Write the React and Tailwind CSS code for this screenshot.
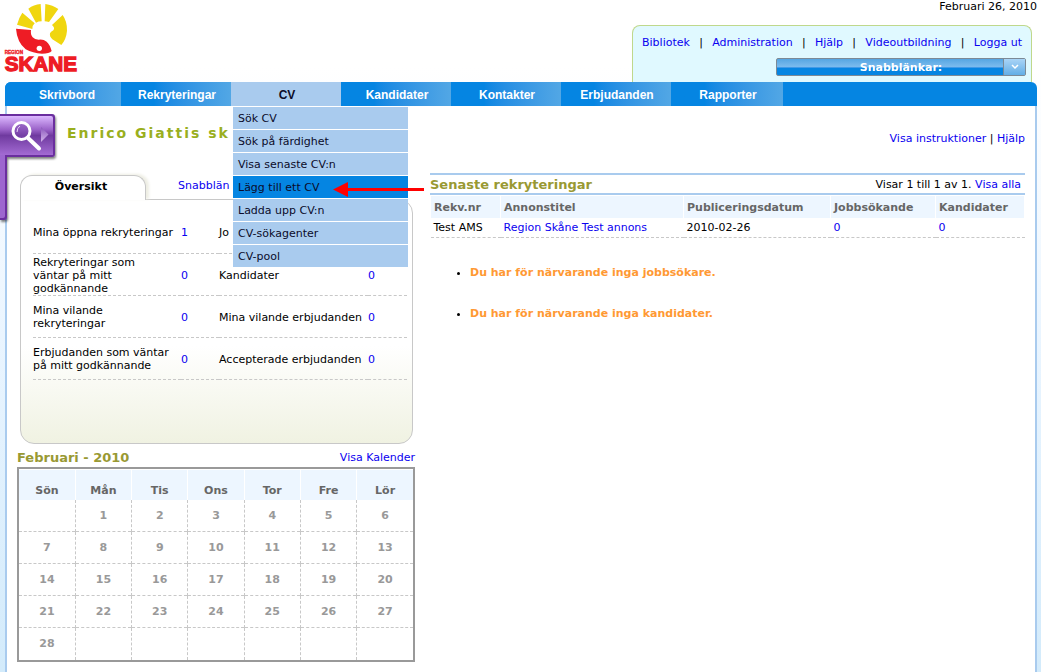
import React, { useState } from 'react';

const topLinks = ['Bibliotek', 'Administration', 'Hjälp', 'Videoutbildning', 'Logga ut'];

const navItems = ['Skrivbord', 'Rekryteringar', 'CV', 'Kandidater', 'Kontakter', 'Erbjudanden', 'Rapporter'];

const cvMenu = ['Sök CV', 'Sök på färdighet', 'Visa senaste CV:n', 'Lägg till ett CV', 'Ladda upp CV:n', 'CV-sökagenter', 'CV-pool'];

const overviewRows = [
  ['Mina öppna rekryteringar', 1, 'Jo', ''],
  ['Rekryteringar som\nväntar på mitt\ngodkännande', 0, 'Kandidater', 0],
  ['Mina vilande\nrekryteringar', 0, 'Mina vilande erbjudanden', 0],
  ['Erbjudanden som väntar\npå mitt godkännande', 0, 'Accepterade erbjudanden', 0],
];

const weekDays = ['Sön', 'Mån', 'Tis', 'Ons', 'Tor', 'Fre', 'Lör'];

const weeks = [
  ['', 1, 2, 3, 4, 5, 6],
  [7, 8, 9, 10, 11, 12, 13],
  [14, 15, 16, 17, 18, 19, 20],
  [21, 22, 23, 24, 25, 26, 27],
  [28, '', '', '', '', '', ''],
];

const Link = ({ children }) => (
  <a href="#" className="text-[#0a00f0] hover:underline">{children}</a>
);

// ── Logo ───────────────────────────────────────────────────────────
const Logo = () => (
  <svg width="80" height="76" viewBox="0 0 240 228" role="img" aria-label="Region Skane">
    <g fill="#f0d60f">
      <path d="M51 74 Q56 54 67 38 L104 70 Q97 76 97 87 Z" />
      <path d="M85 26 Q101 14 122 12 L125 64 Q115 64 108 68 Z" />
      <path d="M136 12 Q158 15 175 27 L147 66 Q140 64 134 64 Z" />
      <path d="M188 45 Q202 65 201 92 Q199 117 184 135 L157 118 Q148 110 150 100 Q152 95 160 91 Q166 84 156 75 Z" />
    </g>
    <path
      fill="#ee1c25"
      d="M48 86 L93 90 Q91 104 98 112 Q104 119 116 119 Q130 117 140 125 Q150 134 155 153 Q148 161 126 161 Q98 160 77 148 Q51 126 48 86 Z"
    />
    <circle cx="118" cy="145" r="8" fill="#ffffff" />
    <g fill="#ee1c25" stroke="#ee1c25" fontFamily="Liberation Sans, sans-serif" fontWeight="bold">
      <text x="14" y="162" fontSize="14" strokeWidth="1">REGION</text>
      <text x="14" y="212" fontSize="62" strokeWidth="4">SKANE</text>
    </g>
  </svg>
);

// ── Header ─────────────────────────────────────────────────────────
const Header = () => (
  <header className="flex items-start justify-between h-[82px]">
    <Logo />
    <div className="flex flex-col items-end">
      <p>Februari 26, 2010</p>
      <div className="w-[400px] h-[57px] mt-3 mr-[5px] pt-2.5 border border-b-0 border-[#bfd88c] rounded-t-lg bg-[#e0f9ff]">
        <div className="flex justify-between px-[9px]">
          {topLinks.map((label, i) => (
            <React.Fragment key={label}>
              {i > 0 && <span>|</span>}
              <Link>{label}</Link>
            </React.Fragment>
          ))}
        </div>
        <div className="relative w-[250px] h-[18px] mt-[9px] ml-auto mr-[5px]">
          <select
            aria-label="Snabblänkar"
            className="block w-full h-full appearance-none border border-[#7c8a96] rounded-[2px] bg-linear-to-b from-[#55a6e2] via-[#7cbcee] via-50% to-[#0585e2] to-55% text-white font-bold leading-[13px] [text-align-last:center] outline-none"
          >
            <option>Snabblänkar:</option>
          </select>
          <span className="absolute right-px inset-y-px w-[22px] flex items-center justify-center border-l border-[#7c8a96] bg-linear-to-b from-[#a9d4f6] to-[#62aee6] pointer-events-none">
            <svg width="8" height="6" viewBox="0 0 8 6" fill="none" stroke="#ffffff" strokeWidth="1.5">
              <path d="M1 1 L4 4 L7 1" />
            </svg>
          </span>
        </div>
      </div>
    </div>
  </header>
);

// ── Navigation ─────────────────────────────────────────────────────
const CvMenu = () => (
  <ul className="absolute left-0.5 top-[25px] z-20 w-[175px] flex flex-col gap-px bg-white text-[11px]">
    {cvMenu.map(label => {
      const active = label === 'Lägg till ett CV';
      return (
        <li key={label} className="relative">
          <a
            href="#"
            className={`flex items-center h-[22px] px-[5px] pt-px text-[#0b0b2a] ${active ? 'bg-[#0585e2]' : 'bg-[#a9cbee] hover:bg-[#0585e2]'}`}
          >
            {label}
          </a>
          {active && (
            <svg className="absolute left-[100px] top-[5px]" width="92" height="16" viewBox="0 0 92 16">
              <path d="M12 8.5 H91" stroke="#ff0000" strokeWidth="3" />
              <path d="M0 8.5 L15 1 V16 Z" fill="#ff0000" />
            </svg>
          )}
        </li>
      );
    })}
  </ul>
);

const NavBar = () => (
  <nav className="h-6 rounded-t-[6px] bg-[#0585e2]">
    <ul className="flex h-full">
      {navItems.map(label => {
        const open = label === 'CV';
        return (
          <li key={label} className="relative w-[110px] first:w-[116px] last:w-[112px]">
            <a
              href="#"
              className={`flex items-center justify-center h-full pt-px pl-0.5 font-['Liberation_Sans',sans-serif] text-xs font-bold ${
                open ? 'bg-[#a9cbee] text-[#0b0b2a]' : 'bg-linear-to-r from-[#0585e2] from-30% to-[#52a7e5] text-white'
              } ${label === 'Skrivbord' ? 'rounded-tl-[6px] pl-2' : ''}`}
            >
              {label}
            </a>
            {open && <CvMenu />}
          </li>
        );
      })}
    </ul>
  </nav>
);

// ── Search tab on the left edge ────────────────────────────────────
const SearchTab = () => (
  <button type="button" aria-label="Sök" className="absolute left-0 top-[113px] z-10">
    <svg width="60" height="112" viewBox="0 0 60 112">
      <defs>
        <linearGradient id="tab" x1="0" y1="0" x2="0" y2="1">
          <stop offset="0" stopColor="#dcb8ff" />
          <stop offset="0.35" stopColor="#9a62c8" />
          <stop offset="0.5" stopColor="#6f3a9f" />
          <stop offset="1" stopColor="#a36bd3" />
        </linearGradient>
        <linearGradient id="arrow" x1="0" y1="0" x2="0" y2="1">
          <stop offset="0" stopColor="#8a57bb" />
          <stop offset="1" stopColor="#d3b4ec" />
        </linearGradient>
        <filter id="shadow" x="-10%" y="-10%" width="120%" height="120%">
          <feDropShadow dx="1" dy="2" stdDeviation="1" floodOpacity="0.5" />
        </filter>
      </defs>
      <g filter="url(#shadow)">
        <path d="M0 1 H52 Q55 1 55 4 V41 Q55 44 52 44 H7 V104 Q7 107 4 107 H0 Z" fill="#6a2f9e" />
      </g>
      <path d="M0 3 H51 Q53 3 53 5 V42 H0 Z" fill="url(#tab)" />
      <path d="M0 42 H5 V103 Q5 105 3 105 H0 Z" fill="#9d66cf" />
      <circle cx="21.5" cy="18" r="8.5" fill="#7b45ab" fillOpacity="0.5" stroke="#ffffff" strokeWidth="3" />
      <path d="M17 19 Q17 15 20 13" fill="none" stroke="#e6d2f7" strokeWidth="1" />
      <path d="M28 25 L39 35.5" stroke="#ffffff" strokeWidth="4" strokeLinecap="round" />
      <path d="M41 14 L48.5 21.5 L41 29 Z" fill="url(#arrow)" />
    </svg>
  </button>
);

// ── Overview panel ─────────────────────────────────────────────────
const Overview = () => {
  const [tab, setTab] = useState('oversikt');

  return (
    <section className="ml-[3px] mr-0.5">
      <div className="flex h-[25px]">
        <button
          type="button"
          onClick={() => setTab('oversikt')}
          className="relative z-[1] w-[126px] pb-1 pr-1 bg-white border border-b-0 border-[#c8c8c8] rounded-t-[12px] font-bold shadow-[3px_-1px_3px_#eeeee4]"
        >
          Översikt
        </button>
        <button type="button" onClick={() => setTab('lankar')} className="ml-8 pb-1 text-[#0a00f0]">
          Snabblän
        </button>
      </div>
      <div className="h-[245px] -mt-px pt-[11px] pl-3 pr-[5px] border border-[#c8c8c8] rounded-[14px] rounded-tl-none bg-linear-to-b from-white from-60% to-[#f0f2e2]">
        {tab === 'oversikt' && (
          <table className="w-full table-fixed border-collapse">
            <colgroup>
              <col className="w-[148px]" />
              <col className="w-[38px]" />
              <col className="w-[149px]" />
              <col />
            </colgroup>
            <tbody>
              {overviewRows.map(([left, leftCount, right, rightCount]) => (
                <tr key={left} className="h-[42px] border-b border-dashed border-[#c8c8c8]">
                  <td className="pt-0.5 whitespace-pre-line">{left}</td>
                  <td className="pt-0.5"><Link>{leftCount}</Link></td>
                  <td className="pt-0.5 whitespace-nowrap">{right}</td>
                  <td className="pt-0.5"><Link>{rightCount}</Link></td>
                </tr>
              ))}
            </tbody>
          </table>
        )}
      </div>
    </section>
  );
};

// ── Calendar ───────────────────────────────────────────────────────
const Calendar = () => (
  <section className="mt-1.5">
    <div className="flex items-start justify-between h-[17px] pt-px">
      <h2 className="text-[13px] font-bold text-[#999933]">Februari - 2010</h2>
      <Link>Visa Kalender</Link>
    </div>
    <div className="border-2 border-[#999999]">
      <table className="w-full table-fixed border-collapse font-bold text-center">
        <thead>
          <tr className="h-[30px] bg-[#edf6ff] border-t border-white text-[#666666]">
            {weekDays.map(day => (
              <th key={day} className="pt-[11px] border-r border-white last:border-r-0">{day}</th>
            ))}
          </tr>
        </thead>
        <tbody>
          {weeks.map((week, i) => (
            <tr key={i} className="h-8 border-b border-dashed border-[#c8c8c8] last:border-b-0 text-[#999999]">
              {week.map((day, j) => (
                <td key={j} className="border-r border-dashed border-[#c8c8c8] last:border-r-0">{day}</td>
              ))}
            </tr>
          ))}
        </tbody>
      </table>
    </div>
  </section>
);

// ── Recent recruitments ────────────────────────────────────────────
const Recruitments = () => (
  <section className="flex-1 min-w-0">
    <div className="flex items-center justify-between h-[22px] pr-1 border-y-2 border-[#a9cbee]">
      <h2 className="text-[13px] font-bold text-[#999933]">Senaste rekryteringar</h2>
      <p>Visar 1 till 1 av 1. <Link>Visa alla</Link></p>
    </div>
    <table className="w-full mt-px table-fixed border-collapse text-left">
      <colgroup>
        <col className="w-[70px]" />
        <col className="w-[183px]" />
        <col className="w-[147px]" />
        <col className="w-[105px]" />
        <col />
      </colgroup>
      <thead>
        <tr className="h-[22px] bg-[#edf6ff] text-[#666666]">
          {['Rekv.nr', 'Annonstitel', 'Publiceringsdatum', 'Jobbsökande', 'Kandidater'].map(label => (
            <th key={label} className="px-[3px] pt-px border-x border-white">{label}</th>
          ))}
        </tr>
      </thead>
      <tbody>
        <tr className="h-[19px] border-b border-dashed border-[#c8c8c8]">
          <td className="px-[3px]">Test AMS</td>
          <td className="px-[3px]"><Link>Region Skåne Test annons</Link></td>
          <td className="px-[3px]">2010-02-26</td>
          <td className="px-[3px]"><Link>0</Link></td>
          <td className="px-[3px]"><Link>0</Link></td>
        </tr>
      </tbody>
    </table>
    <ul className="mt-7 pl-10 list-disc font-bold marker:text-black">
      <li className="mb-7"><span className="text-[#ff9933]">Du har för närvarande inga jobbsökare.</span></li>
      <li><span className="text-[#ff9933]">Du har för närvarande inga kandidater.</span></li>
    </ul>
  </section>
);

const App = () => (
  <div className="relative flex flex-col min-h-screen pl-[5px] pr-1 bg-linear-to-b from-white from-10% via-[#eaf5ff] via-50% to-[#d3ebfb] font-['DejaVu_Sans',sans-serif] text-[11px] leading-[13px] text-black">
    <div className="-ml-[5px]">
      <Header />
    </div>
    <NavBar />
    <SearchTab />
    <main className="flex-1 px-2.5 pb-2.5 border-x-2 border-[#a9cbee] bg-white">
      <div className="flex items-start justify-between h-[67px] pt-5 pl-[50px]">
        <h1 className="text-[14px] leading-[15px] font-bold tracking-[2px] text-[#9aaf1e]">Enrico Giattis sk</h1>
        <p className="mt-1.5"><Link>Visa instruktioner</Link> | <Link>Hjälp</Link></p>
      </div>
      <div className="flex items-start gap-[15px]">
        <div className="w-[398px] shrink-0 pt-0.5">
          <Overview />
          <Calendar />
        </div>
        <Recruitments />
      </div>
    </main>
  </div>
);

export default App;
